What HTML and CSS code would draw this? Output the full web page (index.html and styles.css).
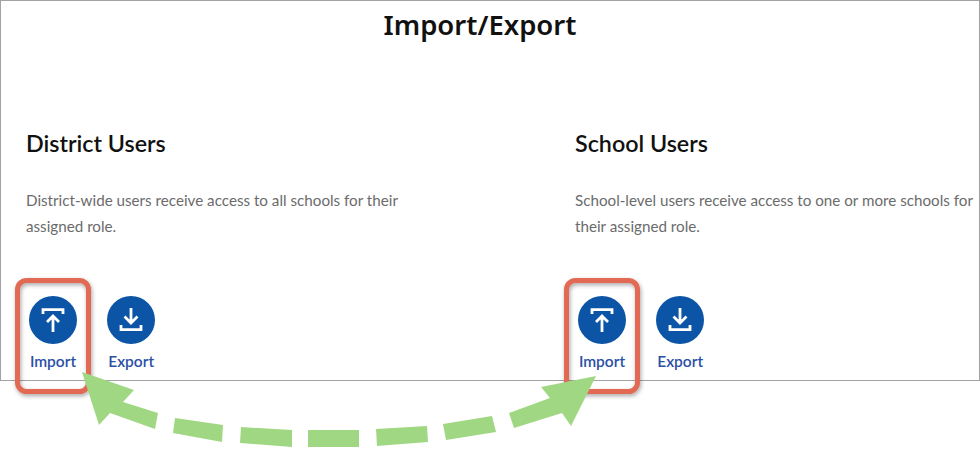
FILE: index.html
```html
<!DOCTYPE html>
<html lang="en">
<head>
  <meta charset="UTF-8" />
  <title>Import/Export</title>
  <link rel="stylesheet" href="styles.css">
</head>
<body>
  <div class="frame">
    <h1 class="page-title">Import/Export</h1>
    <div class="columns">
      <section class="user-group">
        <h2>District Users</h2>
        <p>District-wide users receive access to all schools for their assigned role.</p>
        <div class="actions">
          <a class="action">
            <svg class="action-icon" viewBox="0 0 48 48"><circle cx="24" cy="24" r="24" fill="#0b54a6"/><path d="M14 18V13.700H34V18M24 36V20M18 26L24 20L30 26" fill="none" stroke="#fff" stroke-width="2.800"/></svg>
            <span>Import</span>
          </a>
          <a class="action">
            <svg class="action-icon" viewBox="0 0 48 48"><circle cx="24" cy="24" r="24" fill="#0b54a6"/><path d="M14 29V33.700H34V29M24 12V27M17.500 20.500L24 27L30.500 20.500" fill="none" stroke="#fff" stroke-width="2.800"/></svg>
            <span>Export</span>
          </a>
        </div>
      </section>
      <section class="user-group">
        <h2>School Users</h2>
        <p>School-level users receive access to one or more schools for their assigned role.</p>
        <div class="actions">
          <a class="action">
            <svg class="action-icon" viewBox="0 0 48 48"><circle cx="24" cy="24" r="24" fill="#0b54a6"/><path d="M14 18V13.700H34V18M24 36V20M18 26L24 20L30 26" fill="none" stroke="#fff" stroke-width="2.800"/></svg>
            <span>Import</span>
          </a>
          <a class="action">
            <svg class="action-icon" viewBox="0 0 48 48"><circle cx="24" cy="24" r="24" fill="#0b54a6"/><path d="M14 29V33.700H34V29M24 12V27M17.500 20.500L24 27L30.500 20.500" fill="none" stroke="#fff" stroke-width="2.800"/></svg>
            <span>Export</span>
          </a>
        </div>
      </section>
    </div>
  </div>

  <!-- callouts drawn on top of the screenshot -->
  <svg class="callouts" viewBox="0 0 980 451">
    <defs>
      <filter id="shadow" x="-20%" y="-20%" width="140%" height="140%">
        <feDropShadow dx="1" dy="2" stdDeviation="2" flood-color="#000" flood-opacity="0.35"/>
      </filter>
    </defs>
    <g fill="none" stroke="#e26a55" stroke-width="5" filter="url(#shadow)">
      <rect x="17.500" y="280.500" width="71" height="111" rx="9"/>
      <rect x="566.500" y="280.500" width="71" height="111" rx="9"/>
    </g>
    <g fill="#a0d783">
      <polygon points="82,372 134,390 123,402 158,413 155,429 110,413 99,425"/>
      <polygon points="175,418 223,425 222,442 173,433"/>
      <polygon points="241,427 292,430 292,447 240,443"/>
      <polygon points="308,430 359,430 359,447 308,447"/>
      <polygon points="376,429 427,426 428,442 377,446"/>
      <polygon points="443,424 492,416 496,432 446,440"/>
      <polygon points="509,413 550,398 541,387 596,376 571,426 562,413 514,428"/>
    </g>
  </svg>
</body>
</html>
```

FILE: styles.css
```css
html, body {
  margin: 0;
  height: 451px;
  overflow: hidden;
  background: white;
}
body {
  position: relative;
  font-family: Lato, "Open Sans", sans-serif;
}
.frame {
  box-sizing: border-box;
  height: 381px;
  border: 1px solid #a3a3a3;
  overflow: hidden;
}
.page-title {
  margin: 0;
  padding: 6px 20px 0 0;
  font-family: "Noto Sans", sans-serif;
  font-size: 27.500px;
  line-height: 36px;
  font-weight: 600;
  text-align: center;
  color: #111;
}
.columns {
  display: grid;
  grid-template-columns: 549px 1fr;
  padding-left: 25px;
  margin-top: 86px;
}
.user-group h2 {
  margin: 0;
  font-size: 23.300px;
  line-height: 28px;
  font-weight: 600;
  color: #111;
}
.user-group p {
  width: 405px;
  margin: 30px 0 0;
  font-size: 15.200px;
  line-height: 26px;
  color: #6b6b6b;
}
.actions {
  display: flex;
  gap: 30.200px;
  margin-top: 57px;
  padding-left: 3px;
}
.action {
  display: flex;
  flex-direction: column;
  align-items: center;
  width: 48px;
  color: #2b50a5;
  font-size: 15.500px;
  font-weight: 600;
}
.action-icon {
  width: 48px;
  height: 48px;
  flex: none;
}
.action span {
  margin-top: 8px;
  line-height: 18px;
}
.callouts {
  position: absolute;
  left: 0;
  top: 0;
  width: 980px;
  height: 451px;
}
```
